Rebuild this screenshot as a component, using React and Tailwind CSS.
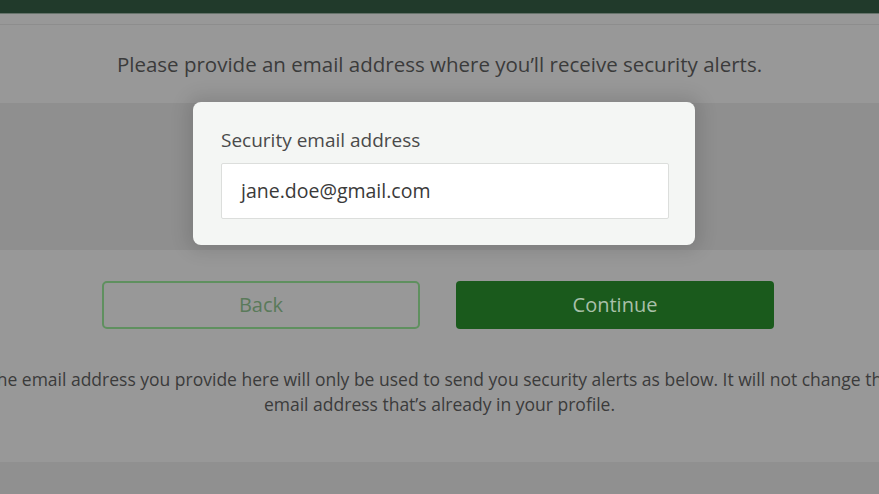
export default function App() {
  const font = { fontFamily: '"Open Sans", "Noto Sans", sans-serif' };
  return (
    <div className="w-[879px] h-[494px] overflow-hidden bg-[#989898] flex flex-col" style={font}>
      <div className="h-[13px] bg-[#213a2b] shrink-0" />
      <div className="h-px bg-[#66736b] shrink-0" />
      <div className="h-[10px] shrink-0" />
      <div className="h-px bg-[#8d8d8d] shrink-0" />
      <div className="h-[78px] shrink-0 flex items-start justify-center pt-[25px]">
        <p className="text-[20.5px] leading-[28px] text-[#3b3b3b] whitespace-nowrap">
          Please provide an email address where you’ll receive security alerts.
        </p>
      </div>
      <div className="h-[147px] shrink-0 bg-[#8f8f8f] relative">
        <div className="absolute left-[193px] top-[-1px] w-[502px] h-[143px] bg-[#f4f6f4] rounded-[8px] shadow-[0_0_18px_6px_rgba(0,0,0,0.12)] px-[28px] pt-[25px]">
          <div className="text-[19px] leading-[26px] text-[#4a4a4a]">Security email address</div>
          <div className="mt-[10px] w-[448px] h-[56px] bg-white border border-[#dcdedc] rounded-[2px] flex items-center px-[19px]">
            <span className="text-[19.5px] text-[#3a3a3a]">jane.doe@gmail.com</span>
          </div>
        </div>
      </div>
      <div className="h-[31px] shrink-0" />
      <div className="flex gap-[36px] pl-[102px] shrink-0">
        <div className="w-[318px] h-[48px] border-2 border-[#5f905f] rounded-[5px] flex items-center justify-center text-[20px] text-[#5a7a5a]">
          Back
        </div>
        <div className="w-[318px] h-[48px] bg-[#1a5a1c] rounded-[4px] flex items-center justify-center text-[20px] text-[#a9c0a9]">
          Continue
        </div>
      </div>
      <div className="h-[38px] shrink-0" />
      <div className="flex justify-center shrink-0">
        <p className="w-[930px] shrink-0 text-center text-[17.5px] leading-[25px] text-[#3b3b3b]">
          The email address you provide here will only be used to send you security alerts as below. It will not change the email address that’s already in your profile.
        </p>
      </div>
      <div className="flex-1" />
      <div className="h-[32px] bg-[#909090] shrink-0" />
    </div>
  );
}
